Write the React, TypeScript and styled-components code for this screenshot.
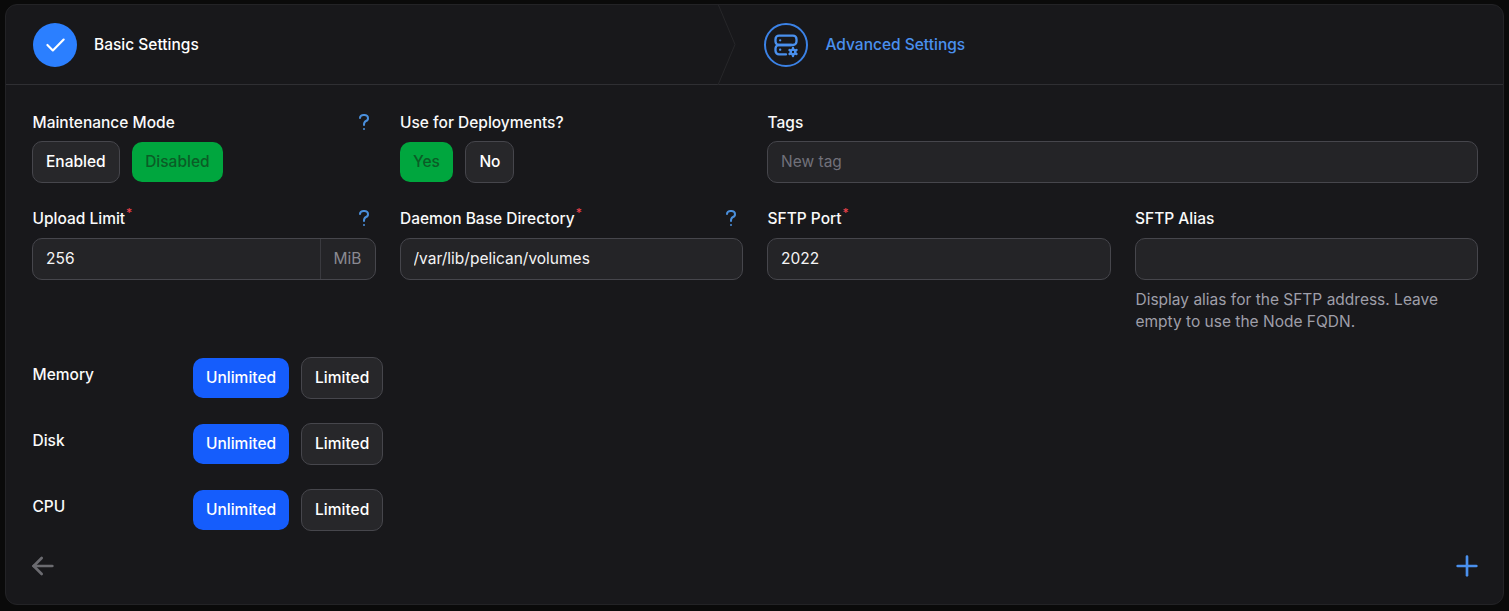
import React from "react";
import styled, { createGlobalStyle } from "styled-components";
import { TbArrowLeft, TbCheck, TbPlus, TbQuestionMark, TbServerCog } from "react-icons/tb";

const GlobalStyle = createGlobalStyle`
  html, body {
    margin: 0;
    background: #0a0a0a;
    font-family: Inter, "Liberation Sans", sans-serif;
    -webkit-font-smoothing: antialiased;
  }
  * { box-sizing: border-box; }
`;

type Tone = "plain" | "green" | "blue";

const toggles = [
  { label: "Memory" },
  { label: "Disk" },
  { label: "CPU" },
];

const App: React.FunctionComponent = () => {
  return (
    <>
      <GlobalStyle />
      <Page>
        <Card>
          <Header>
            <Step>
              <DoneCircle>
                <TbCheck size={26} />
              </DoneCircle>
              <StepTitle>Basic Settings</StepTitle>
            </Step>
            <Chevron width="20" height="81" viewBox="0 0 20 81" fill="none">
              <path d="M1 0 L18 40.5 L1 81" stroke="#27272a" strokeWidth="1" />
            </Chevron>
            <Step>
              <ActiveCircle>
                <TbServerCog size={28} />
              </ActiveCircle>
              <StepTitle $active>Advanced Settings</StepTitle>
            </Step>
          </Header>

          <Body>
            <FormGrid>
              <Field $tight>
                <LabelRow>
                  <Label>Maintenance Mode</Label>
                  <Help><TbQuestionMark size={24} /></Help>
                </LabelRow>
                <ButtonRow>
                  <ToggleButton $tone="plain">Enabled</ToggleButton>
                  <ToggleButton $tone="green">Disabled</ToggleButton>
                </ButtonRow>
              </Field>
              <Field $tight>
                <LabelRow>
                  <Label>Use for Deployments?</Label>
                </LabelRow>
                <ButtonRow>
                  <ToggleButton $tone="green">Yes</ToggleButton>
                  <ToggleButton $tone="plain">No</ToggleButton>
                </ButtonRow>
              </Field>
              <WideField $tight>
                <LabelRow>
                  <Label>Tags</Label>
                </LabelRow>
                <InputBox>
                  <TextInput placeholder="New tag" readOnly />
                </InputBox>
              </WideField>

              <Field>
                <LabelRow>
                  <Label>Upload Limit<Required>*</Required></Label>
                  <Help><TbQuestionMark size={24} /></Help>
                </LabelRow>
                <InputBox>
                  <TextInput value="256" readOnly />
                  <Suffix>MiB</Suffix>
                </InputBox>
              </Field>
              <Field>
                <LabelRow>
                  <Label>Daemon Base Directory<Required>*</Required></Label>
                  <Help><TbQuestionMark size={24} /></Help>
                </LabelRow>
                <InputBox>
                  <TextInput value="/var/lib/pelican/volumes" readOnly />
                </InputBox>
              </Field>
              <Field>
                <LabelRow>
                  <Label>SFTP Port<Required>*</Required></Label>
                </LabelRow>
                <InputBox>
                  <TextInput value="2022" readOnly />
                </InputBox>
              </Field>
              <Field>
                <LabelRow>
                  <Label>SFTP Alias</Label>
                </LabelRow>
                <InputBox>
                  <TextInput readOnly />
                </InputBox>
                <Hint>Display alias for the SFTP address. Leave empty to use the Node FQDN.</Hint>
              </Field>
            </FormGrid>

            <LimitList>
              {toggles.map((item) => (
                <LimitRow key={item.label}>
                  <LimitLabel>{item.label}</LimitLabel>
                  <ButtonRow>
                    <ToggleButton $tone="blue">Unlimited</ToggleButton>
                    <ToggleButton $tone="plain">Limited</ToggleButton>
                  </ButtonRow>
                </LimitRow>
              ))}
            </LimitList>

            <Footer>
              <BackIcon><TbArrowLeft size={32} /></BackIcon>
              <AddIcon><TbPlus size={32} /></AddIcon>
            </Footer>
          </Body>
        </Card>
      </Page>
    </>
  );
};

export default App;

const Page = styled.div`
  width: 1509px;
  height: 611px;
  padding: 4px 5px 6px;
  overflow: hidden;
`;

const Card = styled.div`
  position: relative;
  height: 601px;
  background: #18181b;
  border: 1px solid #232326;
  border-radius: 12px;
  overflow: hidden;
`;

const Header = styled.div`
  position: relative;
  display: grid;
  grid-template-columns: 731px 1fr;
  height: 80px;
  border-bottom: 1px solid #2f2f33;
`;

const Step = styled.div`
  display: flex;
  align-items: center;
  gap: 17px;
  padding-left: 27px;
`;

const DoneCircle = styled.div`
  width: 44px;
  height: 44px;
  border-radius: 50%;
  background: #2b7fff;
  color: #fff;
  display: flex;
  align-items: center;
  justify-content: center;
`;

const ActiveCircle = styled.div`
  width: 44px;
  height: 44px;
  border-radius: 50%;
  border: 2px solid #3b82e6;
  color: #4a90ee;
  display: flex;
  align-items: center;
  justify-content: center;
`;

const StepTitle = styled.span<{ $active?: boolean }>`
  margin-left: ${(p) => (p.$active ? "0.5px" : "0")};
  font-size: 15.5px;
  font-weight: 500;
  color: ${(p) => (p.$active ? "#4a90ee" : "#fff")};
`;

const Chevron = styled.svg`
  position: absolute;
  left: 711px;
  top: -1px;
`;

const Body = styled.div`
  padding: 27px 20px 0 26px;
`;

const FormGrid = styled.div`
  display: grid;
  grid-template-columns: repeat(4, 343.5px);
  column-gap: 24px;
  row-gap: 25px;
  align-items: start;
`;

const Field = styled.div<{ $tight?: boolean }>`
  display: flex;
  flex-direction: column;
  gap: ${(p) => (p.$tight ? "9px" : "10px")};
  min-width: 0;
`;

const WideField = styled(Field)`
  grid-column: span 2;
`;

const LabelRow = styled.div`
  display: flex;
  align-items: center;
  justify-content: space-between;
  height: 20px;
`;

const Label = styled.label`
  padding-left: 0.5px;
  font-size: 15.5px;
  font-weight: 500;
  color: #fafafa;
`;

const Required = styled.sup`
  color: #e7424b;
  font-size: 12px;
  line-height: 0;
  margin-left: 1px;
`;

const Help = styled.span`
  display: flex;
  color: #4a8fdc;
`;

const ButtonRow = styled.div`
  display: flex;
  align-items: center;
  gap: 12px;
  height: 42px;
`;

const toneStyles: Record<Tone, string> = {
  plain: "background:#27272a;border:1px solid #46464c;color:#fff;height:42px;padding:0 13px 2px;",
  green: "background:#00a63e;border:none;color:#0b5c26;height:40px;padding:0 13.5px 2px;",
  blue: "background:#155dfc;border:none;color:#fff;height:40px;padding:0 13px 2px;",
};

const ToggleButton = styled.button<{ $tone: Tone }>`
  font-family: inherit;
  font-size: 15.5px;
  font-weight: 500;
  border-radius: 10px;
  ${(p) => toneStyles[p.$tone]}
`;

const InputBox = styled.div`
  display: flex;
  height: 42px;
  background: #242427;
  border: 1px solid #46464c;
  border-radius: 10px;
  overflow: hidden;
`;

const TextInput = styled.input`
  flex: 1;
  min-width: 0;
  background: transparent;
  border: none;
  outline: none;
  padding: 0 13px 2px;
  font-family: inherit;
  font-size: 15.5px;
  color: #f4f4f5;

  &::placeholder {
    color: #71717a;
  }
`;

const Suffix = styled.span`
  display: flex;
  align-items: center;
  padding: 0 13px 2px;
  border-left: 1px solid #3a3a3f;
  font-size: 15.5px;
  color: #8a8a92;
`;

const Hint = styled.p`
  margin: -1px 0 0;
  padding-left: 1px;
  font-size: 15.5px;
  line-height: 22px;
  color: #9f9fa9;
`;

const LimitList = styled.div`
  display: flex;
  flex-direction: column;
  gap: 24px;
  margin-top: 24px;
`;

const LimitRow = styled.div`
  display: flex;
  align-items: flex-start;
`;

const LimitLabel = styled.span`
  width: 161px;
  padding: 8px 0 0 0.5px;
  font-size: 15.5px;
  font-weight: 500;
  color: #fafafa;
`;

const Footer = styled.div`
  display: flex;
  align-items: center;
  justify-content: space-between;
  width: 1446px;
  margin: 19px 0 0;
`;

const BackIcon = styled.span`
  display: flex;
  margin-left: -5px;
  color: #6b6b70;
`;

const AddIcon = styled.span`
  display: flex;
  margin-right: -4.5px;
  color: #4a90ee;
`;
